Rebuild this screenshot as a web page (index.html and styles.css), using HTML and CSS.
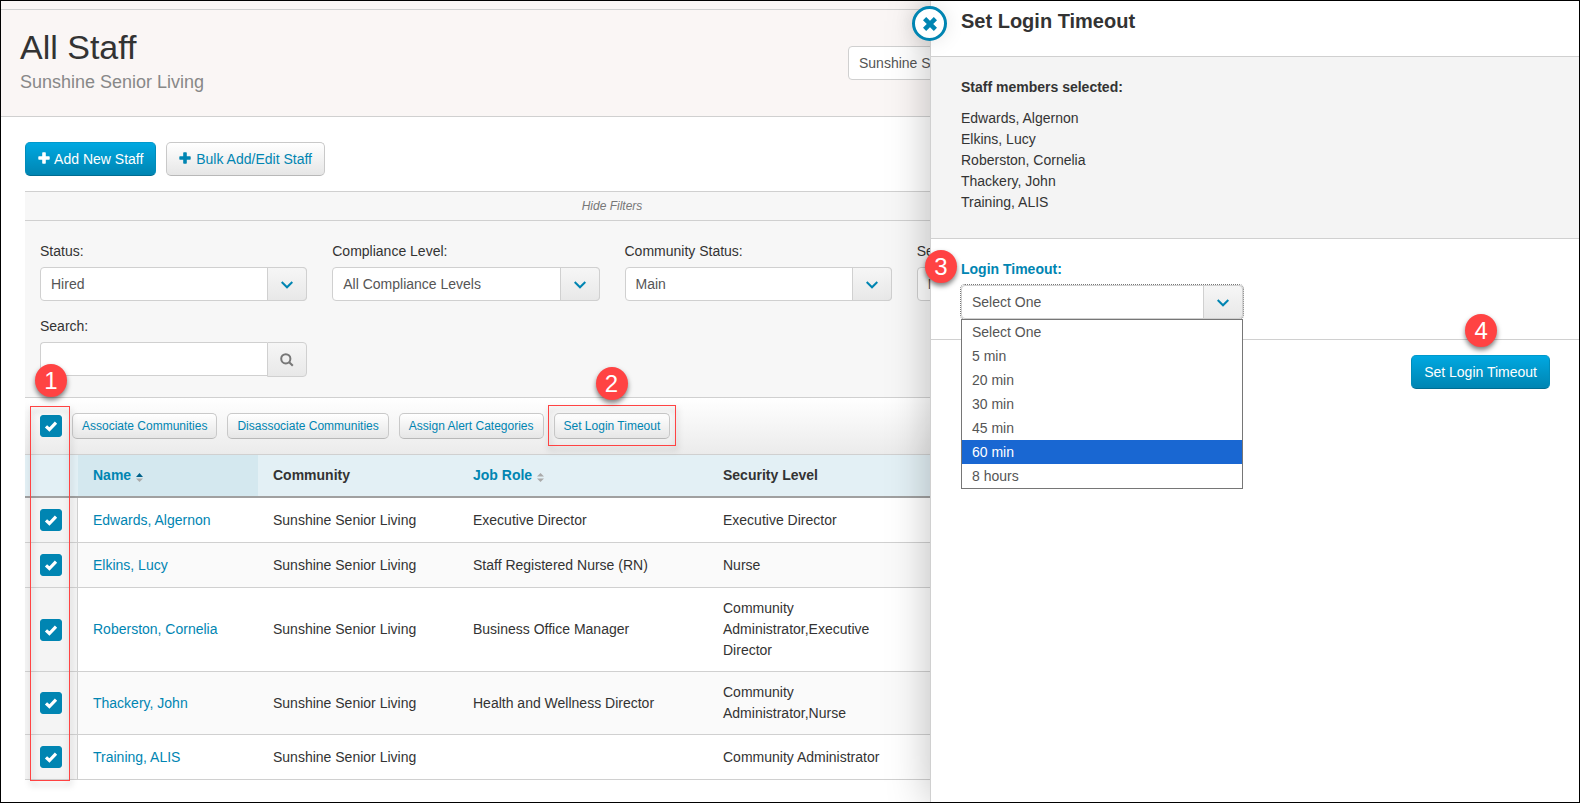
FILE: index.html
```html
<!DOCTYPE html>
<html lang="en">
<head>
  <meta charset="UTF-8">
  <title>All Staff</title>
  <link rel="stylesheet" href="styles.css">
</head>
<body>

  <div class="page">
    <div class="topbar"></div>

    <header class="page-header">
      <div>
        <h1>All Staff</h1>
        <p class="subtitle">Sunshine Senior Living</p>
      </div>
      <select class="community-select" aria-label="Community">
        <option>Sunshine Senior Living</option>
      </select>
    </header>

    <main class="content">
      <div class="actions">
        <button class="btn btn-primary">
          <svg class="icon-plus" viewBox="0 0 12 12"><path d="M4.2 1Q4.2 .3 4.9 .3H7.1Q7.8 .3 7.8 1V4.2H11Q11.7 4.2 11.7 4.9V7.1Q11.7 7.8 11 7.8H7.8V11Q7.8 11.7 7.1 11.7H4.9Q4.2 11.7 4.2 11V7.8H1Q.3 7.8 .3 7.1V4.9Q.3 4.2 1 4.2H4.2Z"/></svg>
          Add New Staff
        </button>
        <button class="btn">
          <svg class="icon-plus" viewBox="0 0 12 12"><path d="M4.2 1Q4.2 .3 4.9 .3H7.1Q7.8 .3 7.8 1V4.2H11Q11.7 4.2 11.7 4.9V7.1Q11.7 7.8 11 7.8H7.8V11Q7.8 11.7 7.1 11.7H4.9Q4.2 11.7 4.2 11V7.8H1Q.3 7.8 .3 7.1V4.9Q.3 4.2 1 4.2H4.2Z"/></svg>
          Bulk Add/Edit Staff
        </button>
      </div>

      <button class="filter-toggle">Hide Filters</button>

      <form class="filters">
        <div class="field">
          <label for="status">Status:</label>
          <div class="select-box">
            <select id="status"><option>Hired</option></select>
            <span class="select-arrow"><svg viewBox="0 0 12 8"><path d="M.7 1L6 6.3L11.3 1"/></svg></span>
          </div>
        </div>
        <div class="field">
          <label for="compliance">Compliance Level:</label>
          <div class="select-box">
            <select id="compliance"><option>All Compliance Levels</option></select>
            <span class="select-arrow"><svg viewBox="0 0 12 8"><path d="M.7 1L6 6.3L11.3 1"/></svg></span>
          </div>
        </div>
        <div class="field">
          <label for="communityStatus">Community Status:</label>
          <div class="select-box">
            <select id="communityStatus"><option>Main</option></select>
            <span class="select-arrow"><svg viewBox="0 0 12 8"><path d="M.7 1L6 6.3L11.3 1"/></svg></span>
          </div>
        </div>
        <div class="field">
          <label for="security">Security Level:</label>
          <div class="select-box">
            <select id="security"><option>None</option></select>
            <span class="select-arrow"><svg viewBox="0 0 12 8"><path d="M.7 1L6 6.3L11.3 1"/></svg></span>
          </div>
        </div>
        <div class="field">
          <label for="search">Search:</label>
          <div class="search-box">
            <input type="text" id="search">
            <button type="button" aria-label="Search">
              <svg viewBox="0 0 14 14"><circle cx="5.8" cy="5.8" r="4.6"/><path d="M9.2 9.2L12.8 12.8"/></svg>
            </button>
          </div>
        </div>
      </form>

      <div class="staff">
        <div class="toolbar">
          <input type="checkbox" class="check" aria-label="Select all" checked>
          <button class="btn btn-small">Associate Communities</button>
          <button class="btn btn-small">Disassociate Communities</button>
          <button class="btn btn-small">Assign Alert Categories</button>
          <div class="step-target">
            <button class="btn btn-small">Set Login Timeout</button>
            <div class="outline outline-button"></div>
            <span class="badge badge-2">2</span>
          </div>
        </div>

        <table>
          <colgroup>
            <col class="col-check">
            <col class="col-name">
            <col class="col-community">
            <col class="col-role">
            <col class="col-security">
            <col>
          </colgroup>
          <thead>
            <tr>
              <th></th>
              <th class="sorted"><a href="#">Name <svg class="sort" viewBox="0 0 7 9"><path class="up" d="M0 4L3.5 0L7 4Z"/><path class="down" d="M0 5.5H7L3.5 9Z"/></svg></a></th>
              <th>Community</th>
              <th><a href="#">Job Role <svg class="sort" viewBox="0 0 7 9"><path class="down" d="M0 3.5L3.5 0L7 3.5Z"/><path class="down" d="M0 5.5H7L3.5 9Z"/></svg></a></th>
              <th>Security Level</th>
              <th></th>
            </tr>
          </thead>
          <tbody>
            <tr>
              <td><input type="checkbox" class="check" aria-label="Edwards, Algernon" checked></td>
              <td><a href="#">Edwards, Algernon</a></td>
              <td>Sunshine Senior Living</td>
              <td>Executive Director</td>
              <td>Executive Director</td>
              <td></td>
            </tr>
            <tr>
              <td><input type="checkbox" class="check" aria-label="Elkins, Lucy" checked></td>
              <td><a href="#">Elkins, Lucy</a></td>
              <td>Sunshine Senior Living</td>
              <td>Staff Registered Nurse (RN)</td>
              <td>Nurse</td>
              <td></td>
            </tr>
            <tr>
              <td><input type="checkbox" class="check" aria-label="Roberston, Cornelia" checked></td>
              <td><a href="#">Roberston, Cornelia</a></td>
              <td>Sunshine Senior Living</td>
              <td>Business Office Manager</td>
              <td>Community Administrator,Executive Director</td>
              <td></td>
            </tr>
            <tr>
              <td><input type="checkbox" class="check" aria-label="Thackery, John" checked></td>
              <td><a href="#">Thackery, John</a></td>
              <td>Sunshine Senior Living</td>
              <td>Health and Wellness Director</td>
              <td>Community Administrator,Nurse</td>
              <td></td>
            </tr>
            <tr>
              <td><input type="checkbox" class="check" aria-label="Training, ALIS" checked></td>
              <td><a href="#">Training, ALIS</a></td>
              <td>Sunshine Senior Living</td>
              <td></td>
              <td>Community Administrator</td>
              <td></td>
            </tr>
          </tbody>
        </table>

        <div class="outline outline-checks"></div>
        <span class="badge badge-1">1</span>
      </div>
    </main>

    <aside class="drawer">
      <button class="close" aria-label="Close">
        <svg viewBox="0 0 16 16"><path d="M3.2 3.2L12.8 12.8M12.8 3.2L3.2 12.8"/></svg>
      </button>
      <h2>Set Login Timeout</h2>
      <section class="selected">
        <h3>Staff members selected:</h3>
        <ul>
          <li>Edwards, Algernon</li>
          <li>Elkins, Lucy</li>
          <li>Roberston, Cornelia</li>
          <li>Thackery, John</li>
          <li>Training, ALIS</li>
        </ul>
      </section>
      <section class="timeout">
        <label for="timeout">Login Timeout:</label>
        <div class="select-box open">
          <select id="timeout"><option>Select One</option></select>
          <span class="select-arrow"><svg viewBox="0 0 12 8"><path d="M.7 1L6 6.3L11.3 1"/></svg></span>
          <ul class="options" role="listbox" aria-label="Login Timeout">
            <li role="option">Select One</li>
            <li role="option">5 min</li>
            <li role="option">20 min</li>
            <li role="option">30 min</li>
            <li role="option">45 min</li>
            <li role="option" class="active" aria-selected="true">60 min</li>
            <li role="option">8 hours</li>
          </ul>
        </div>
        <span class="badge badge-3">3</span>
      </section>
      <div class="drawer-footer">
        <div class="step-target">
          <button class="btn btn-primary">Set Login Timeout</button>
          <span class="badge badge-4">4</span>
        </div>
      </div>
    </aside>
  </div>

</body>
</html>
```
FILE: styles.css
```css
:root {
  --text: #333;
  --muted: #888;
  --field-text: #555;
  --accent: #0085b2;
  --line: #d0d0d0;
  --red: #ff4343;
}
* { box-sizing: border-box; }
body {
  margin: 0;
  font: 14px/21px "Liberation Sans", Arial, sans-serif;
  color: var(--text);
  background: #fff;
}
h1, h2, h3, p, ul { margin: 0; padding: 0; }
ul { list-style: none; }
a { color: var(--accent); text-decoration: none; }
button, input, select { font: inherit; margin: 0; }
button { cursor: pointer; }

.page {
  position: relative;
  min-height: 100vh;
  border: 1px solid #000;
  overflow: hidden;
}
.topbar {
  height: 9px;
  background: #faf6f5;
  border-bottom: 1px solid var(--line);
}
.page-header {
  display: flex;
  justify-content: space-between;
  align-items: flex-start;
  padding: 16px 380px 20px 19px;
  background: #faf6f5;
  border-bottom: 1px solid var(--line);
}
.page-header h1 {
  font-size: 34px; line-height: 42px; font-weight: normal;
}
.subtitle {
  font-size: 18px; line-height: 28px; color: var(--muted);
}
.community-select {
  appearance: none;
  width: 351px; height: 34px;
  margin-top: 20px;
  padding: 0 10px;
  color: var(--field-text);
  background: #fff;
  border: 1px solid var(--line);
  border-radius: 4px;
}
.content {
  padding: 25px 380px 20px 24px;
}

/* buttons */
.actions {
  display: flex; gap: 10px;
  margin-bottom: 15px;
}
.btn {
  height: 34px;
  padding: 0 12px;
  color: var(--accent);
  background: linear-gradient(#fff, #e6e6e6);
  border: 1px solid #c9c9c9;
  border-bottom-color: #b8b8b8;
  border-radius: 5px;
  white-space: nowrap;
}
.btn-primary {
  color: #fff;
  background: linear-gradient(#00a8e1, #0085b2);
  border-color: #0099cc #008cba #006c91;
}
.btn-small {
  height: 26px;
  padding: 0 9px;
  font-size: 12px;
  line-height: 16px;
}
.icon-plus {
  width: 12px; height: 12px;
  margin-right: 1px;
  fill: currentColor;
}

/* filters */
.filter-toggle {
  display: block;
  width: 100%; height: 30px;
  padding: 0;
  font-size: 12px; font-style: italic;
  color: #777;
  background: #f7f7f7;
  border: solid var(--line);
  border-width: 1px 0;
}
.filters {
  display: grid;
  grid-template-columns: repeat(4, minmax(0, 1fr));
  gap: 15px 25px;
  padding: 20px 15px;
  background: #f7f7f7;
  border-bottom: 1px solid var(--line);
}
.field label {
  display: block;
  margin-bottom: 5px;
}
.select-box {
  position: relative;
  height: 34px;
}
.select-box select {
  appearance: none;
  width: 100%; height: 100%;
  padding: 0 50px 0 10px;
  color: var(--field-text);
  background: #fff;
  border: 1px solid var(--line);
  border-radius: 4px;
}
.select-arrow {
  position: absolute;
  top: 0; right: 0; bottom: 0;
  width: 40px;
  display: flex; align-items: center; justify-content: center;
  padding-top: 2px;
  background: linear-gradient(#f6f6f6, #e8e8e8);
  border: 1px solid var(--line);
  border-radius: 0 4px 4px 0;
  pointer-events: none;
}
.select-arrow svg {
  width: 12px; height: 8px;
  fill: none; stroke: var(--accent); stroke-width: 2;
}
.search-box { display: flex; }
.search-box input {
  flex: 1;
  min-width: 0; height: 34px;
  padding: 0 10px;
  background: #fff;
  border: 1px solid var(--line);
  border-right: none;
  border-radius: 4px 0 0 4px;
}
.search-box button {
  width: 40px; height: 35px;
  display: flex; align-items: center; justify-content: center;
  padding: 0;
  background: linear-gradient(#f6f6f6, #e8e8e8);
  border: 1px solid var(--line);
  border-radius: 0 4px 4px 0;
}
.search-box svg {
  width: 14px; height: 14px;
  fill: none; stroke: #777; stroke-width: 2;
}

/* staff table */
.staff { position: relative; }
.toolbar {
  display: flex; align-items: center; gap: 10px;
  height: 57px;
  padding-left: 15px;
  background: linear-gradient(#fff, #ebebeb);
  border-bottom: 1px solid var(--line);
}
.step-target { position: relative; }
.step-target .btn { display: block; }
.check {
  appearance: none;
  display: block;
  width: 22px; height: 22px;
  border: 1px solid var(--line);
  border-radius: 3px;
}
.check:checked {
  border-color: var(--accent);
  background: var(--accent) url("data:image/svg+xml,%3Csvg xmlns='http://www.w3.org/2000/svg' viewBox='0 0 20 20'%3E%3Cpath d='M5 10.3L8.4 13.5L15 6.7' fill='none' stroke='%23fff' stroke-width='3.2'/%3E%3C/svg%3E") center / 20px 20px no-repeat;
}
table {
  width: 100%;
  table-layout: fixed;
  border-collapse: separate;
  border-spacing: 0;
}
.col-check { width: 53px; }
.col-name { width: 180px; }
.col-community { width: 200px; }
.col-role { width: 250px; }
.col-security { width: 200px; }
th {
  height: 43px;
  padding: 0 15px;
  text-align: left;
  background: #e3f0f5;
  border-bottom: 2px solid #a0a0a0;
}
th.sorted { background: #d4e8ef; }
.sort {
  width: 7px; height: 9px;
  margin-left: 1px;
  vertical-align: -2px;
}
.sort .up { fill: #00618a; }
.sort .down { fill: #aaa; }
td {
  height: 45px;
  padding: 10px 15px;
  border-bottom: 1px solid var(--line);
}
tbody tr:nth-child(even) { background: #fafafa; }
td:first-child {
  background: #f4f4f4;
  border-right: 1px solid var(--line);
}

/* drawer */
.drawer {
  position: absolute;
  top: 0; right: 0; bottom: 0;
  width: 649px;
  background: #fff;
  border-left: 1px solid var(--line);
  box-shadow: 0 0 40px rgba(0, 0, 0, .25);
}
.drawer h2 {
  padding: 8px 30px 23px;
  font-size: 20px; line-height: 24px;
  border-bottom: 1px solid var(--line);
}
.close {
  position: absolute;
  top: 5px; left: -19px;
  width: 35px; height: 35px;
  display: flex; align-items: center; justify-content: center;
  padding: 0;
  background: #fff;
  border: 3px solid var(--accent);
  border-radius: 50%;
  box-shadow: 0 0 20px rgba(0, 0, 0, .1);
}
.close svg {
  flex: none;
  width: 18px; height: 18px;
  stroke: var(--accent); stroke-width: 4;
}
.selected {
  padding: 20px 30px 25px;
  background: #f4f4f4;
  border-bottom: 1px solid var(--line);
}
.selected h3 {
  font-size: 14px;
  margin-bottom: 10px;
}
.timeout {
  position: relative;
  padding: 20px 30px;
  border-bottom: 1px solid var(--line);
}
.timeout label {
  display: block;
  margin-bottom: 5px;
  font-weight: bold;
  color: var(--accent);
}
.timeout .select-box { width: 282px; }
.open select { outline: 1px dotted #777; }
.options {
  position: absolute;
  top: 100%; left: 0; right: 0;
  z-index: 1;
  color: var(--field-text);
  background: #fff;
  border: 1px solid #767676;
}
.options li {
  padding: 0 10px;
  line-height: 24px;
}
.options .active {
  color: #fff;
  background: #1967d2;
}
.drawer-footer {
  display: flex; justify-content: flex-end;
  padding: 15px 29px;
}

/* numbered steps */
.badge {
  position: absolute;
  z-index: 2;
  width: 32px; height: 33px;
  font-size: 24px; line-height: 33px;
  text-align: center;
  color: #fff;
  background: var(--red);
  border-radius: 50%;
  box-shadow: 0 3px 5px rgba(0, 0, 0, .5);
}
.badge-1 { top: -34px; left: 10px; }
.badge-2 { top: -46px; left: 42px; }
.badge-3 { top: 11px; left: -6px; }
.badge-4 { top: -41px; left: 54px; }
.outline {
  position: absolute;
  border: 1px solid var(--red);
  filter: drop-shadow(1px 4px 3px rgba(0, 0, 0, .35));
  pointer-events: none;
}
.outline-checks { top: 8px; bottom: -1px; left: 5px; width: 40px; }
.outline-button { top: -8px; right: -6px; bottom: -7px; left: -6px; }
```
